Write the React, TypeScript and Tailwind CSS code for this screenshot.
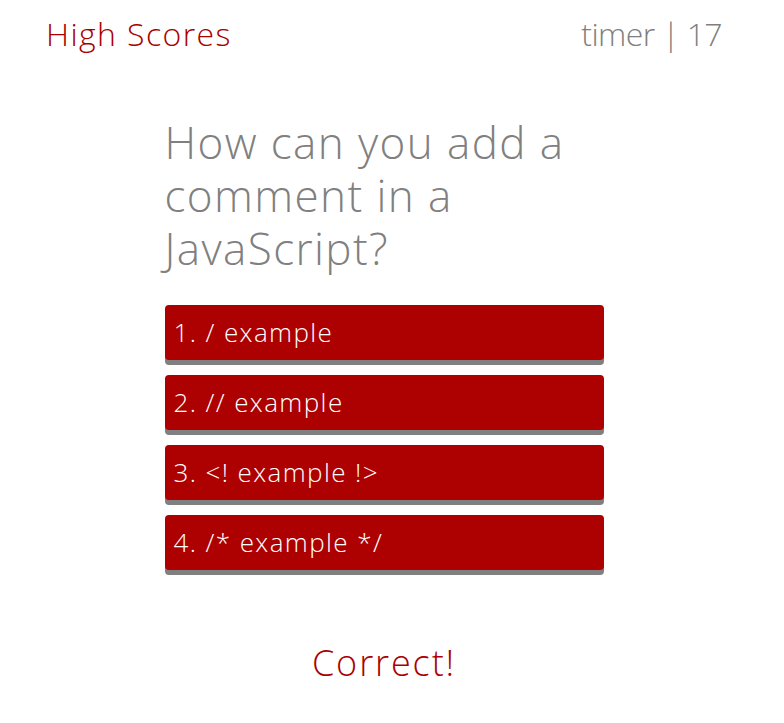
const answers = ["1. / example", "2. // example", "3. <! example !>", "4. /* example */"];

export default function App() {
  return (
    <div className="w-[768px] min-h-[723px] bg-white font-['Open_Sans',sans-serif] font-light tracking-[1.4px]">
      <header className="flex flex-row justify-between items-center px-[46px] pt-[11px]">
        <a className="text-[32px] leading-[46px] text-[#aa0000]">High Scores</a>
        <span className="text-[32px] leading-[46px] tracking-[-0.6px] text-[#7f7f7f]">timer | 17</span>
      </header>
      <main className="w-[439px] mx-auto mt-[59px] flex flex-col">
        <h1 className="text-[44px] leading-[53px] text-[#808080]">
          How can you add a comment in a JavaScript?
        </h1>
        <div className="flex flex-col gap-[15px] mt-[30px]">
          {answers.map((a) => (
            <button
              key={a}
              className="h-[55px] w-full rounded-[4px] bg-[#ad0000] text-left pl-[9px] text-[26px] text-white tracking-[1.4px] shadow-[0_5px_0_#808080]"
            >
              {a}
            </button>
          ))}
        </div>
        <p className="mt-[66px] text-center text-[36px] tracking-[1.9px] text-[#aa0000]">Correct!</p>
      </main>
    </div>
  );
}
